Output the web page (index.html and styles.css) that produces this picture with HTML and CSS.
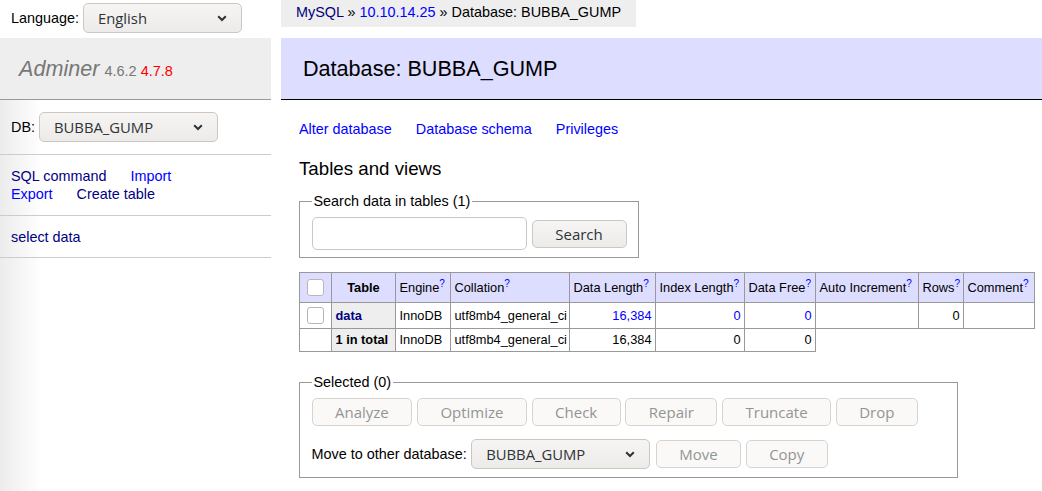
FILE: index.html
```html
<!DOCTYPE html>
<html lang="en">
<head>
<meta charset="utf-8">
<title>Database: BUBBA_GUMP - Adminer</title>
<link rel="stylesheet" href="styles.css">
</head>
<body>
<div class="page">
  <aside class="menu">
    <form class="lang">
      <label class="lbl">Language:</label>
      <div class="select sel-lang"><span>English</span><svg class="chev" width="10" height="7" viewBox="0 0 10 7"><path d="M1.2 1.2 L5 5 L8.8 1.2" fill="none" stroke="#2e3436" stroke-width="2"/></svg></div>
    </form>
    <h1><a class="h1" href="#">Adminer</a> <span class="version">4.6.2</span> <a class="version newver" href="#">4.7.8</a></h1>
    <div class="menu-body">
      <p class="dbs"><span>DB:</span><span class="select sel-db"><span>BUBBA_GUMP</span><svg class="chev" width="10" height="7" viewBox="0 0 10 7"><path d="M1.2 1.2 L5 5 L8.8 1.2" fill="none" stroke="#2e3436" stroke-width="2"/></svg></span></p>
      <p class="mlinks"><a class="v lk" href="#">SQL command</a> <a class="lk" href="#">Import</a><br><a class="lk" href="#">Export</a> <a class="v lk" href="#">Create table</a></p>
      <ul class="tables"><li><a class="v" href="#">select data</a></li></ul>
    </div>
  </aside>
  <main class="content">
    <div class="bc-wrap"><p class="breadcrumb"><a class="v" href="#">MySQL</a> » <a href="#">10.10.14.25</a> » Database: BUBBA_GUMP</p></div>
    <h2>Database: BUBBA_GUMP</h2>
    <div class="inner">
      <p class="links"><a class="lk" href="#">Alter database</a> <a class="lk" href="#">Database schema</a> <a class="lk" href="#">Privileges</a></p>
      <h3>Tables and views</h3>
      <fieldset class="search">
        <legend>Search data in tables (1)</legend>
        <div class="row">
          <input class="field" type="search">
          <button class="btn btn-search" type="button">Search</button>
        </div>
      </fieldset>
      <table class="grid">
        <colgroup>
          <col class="c-check"><col class="c-table"><col class="c-engine"><col class="c-coll"><col class="c-dlen">
          <col class="c-ilen"><col class="c-free"><col class="c-auto"><col class="c-rows"><col class="c-comm">
        </colgroup>
        <thead>
          <tr class="hrow">
            <td><input type="checkbox"></td>
            <th>Table</th>
            <td>Engine<sup><a href="#">?</a></sup></td>
            <td>Collation<sup><a href="#">?</a></sup></td>
            <td>Data Length<sup><a href="#">?</a></sup></td>
            <td>Index Length<sup><a href="#">?</a></sup></td>
            <td>Data Free<sup><a href="#">?</a></sup></td>
            <td>Auto Increment<sup><a href="#">?</a></sup></td>
            <td>Rows<sup><a href="#">?</a></sup></td>
            <td>Comment<sup><a href="#">?</a></sup></td>
          </tr>
        </thead>
        <tbody>
          <tr class="r1">
            <td><input type="checkbox"></td>
            <th><a class="v" href="#">data</a></th>
            <td>InnoDB</td>
            <td>utf8mb4_general_ci</td>
            <td class="number"><a href="#">16,384</a></td>
            <td class="number"><a href="#">0</a></td>
            <td class="number"><a href="#">0</a></td>
            <td class="number"></td>
            <td class="number">0</td>
            <td></td>
          </tr>
          <tr class="r2">
            <td></td>
            <th>1 in total</th>
            <td>InnoDB</td>
            <td>utf8mb4_general_ci</td>
            <td class="number">16,384</td>
            <td class="number">0</td>
            <td class="number">0</td>
          </tr>
        </tbody>
      </table>
      <fieldset class="selected">
        <legend>Selected (0)</legend>
        <div class="row btnrow">
          <button class="btn" type="button" disabled>Analyze</button>
          <button class="btn" type="button" disabled>Optimize</button>
          <button class="btn" type="button" disabled>Check</button>
          <button class="btn" type="button" disabled>Repair</button>
          <button class="btn" type="button" disabled>Truncate</button>
          <button class="btn" type="button" disabled>Drop</button>
        </div>
        <div class="row moverow">
          <span>Move to other database:</span>
          <span class="select sel-move"><span>BUBBA_GUMP</span><svg class="chev" width="10" height="7" viewBox="0 0 10 7"><path d="M1.2 1.2 L5 5 L8.8 1.2" fill="none" stroke="#2e3436" stroke-width="2"/></svg></span>
          <button class="btn" type="button" disabled>Move</button>
          <button class="btn" type="button" disabled>Copy</button>
        </div>
      </fieldset>
    </div>
  </main>
</div>
</body>
</html>
```
FILE: styles.css
```css
* { box-sizing: border-box; }
html, body { margin: 0; }
body {
  font: 14.4px/1.25 "Liberation Sans", Arial, sans-serif;
  color: #000;
  background: #fff;
}
a { color: #00f; text-decoration: none; }
a.v { color: #000080; }
.lk { margin-right: 20px; }

.page { display: flex; min-height: 100vh; }

/* sidebar */
.menu { width: 271px; flex: none; display: flex; flex-direction: column; }
.lang {
  height: 38px; margin: 0;
  display: flex; align-items: center; gap: 4px;
  padding: 0 0 2px 11px;
}
.select {
  height: 30px;
  display: flex; align-items: center; justify-content: space-between;
  padding: 0 14px;
  border: 1px solid #cdc7c2; border-radius: 5px;
  background: linear-gradient(#f6f5f4, #edebe9);
  font: 14.8px "Open Sans", "DejaVu Sans", sans-serif;
  color: #2e3436;
}
.sel-lang { width: 159px; }
.sel-db { width: 179px; }
.sel-move { width: 179px; }
.chev { flex: none; }

h1 {
  margin: 0;
  height: 62px;
  padding: 0 19px;
  display: flex; align-items: baseline; gap: 5px;
  padding-top: 17px;
  font-size: 21.6px; line-height: 27px; font-weight: normal;
  background: #eee; color: #777;
  border-bottom: 1px solid #999;
}
.h1 { color: #777; font-style: italic; }
.version { color: #777; font-size: 14.5px; line-height: 1; }
.newver { color: red; margin-left: -1px; }

.menu-body { flex: 1; background: linear-gradient(to right, #ececec 0, #fff 42px); }
.dbs {
  margin: 0; padding: 12px 11px;
  display: flex; align-items: center; gap: 4px;
  border-bottom: 1px solid #ccc;
}
.mlinks {
  margin: 0; padding: 12px 11px;
  line-height: 18px;
  border-bottom: 1px solid #ccc;
}
.tables {
  list-style: none; margin: 0;
  padding: 12px 11px 11px;
  line-height: 18px;
  border-bottom: 1px solid #ccc;
}

/* content */
.content { flex: 1; margin-left: 10px; }
.bc-wrap { height: 38px; }
.breadcrumb {
  display: inline-block; margin: 0;
  height: 27px; line-height: 25px;
  padding: 0 15px;
  background: #eee;
  white-space: nowrap;
}
h2 {
  margin: 0 0 20px;
  padding: 17px 22px;
  font-size: 21.6px; line-height: 27px; font-weight: normal;
  background: #ddf; color: #000;
  border-bottom: 1px solid #000;
}
.inner { padding: 0 0 20px 18px; }
.links { margin: 0; line-height: 18px; }
h3 {
  margin: 19px 0 0;
  font-size: 18.72px; line-height: 23px; font-weight: normal;
}

fieldset {
  margin: 12px 0 0;
  padding: 0 11.5px 7px;
  border: 1px solid #999;
  min-width: 0;
}
legend { padding: 0 2px; line-height: 18px; }
.row { display: flex; align-items: center; }
.search { width: 340px; padding-top: 7px; }
.search .row { gap: 5px; }
.field {
  width: 215px; height: 33px;
  border: 1px solid #cdc7c2; border-radius: 5px;
  background: #fff;
}
.btn {
  height: 28px;
  padding: 0 22.5px;
  border: 1px solid #cdc7c2; border-radius: 5px;
  background: linear-gradient(#f6f5f4, #edebe9);
  font: 15px "Open Sans", "DejaVu Sans", sans-serif;
  color: #2e3436;
}
.btn-search { width: 95px; padding: 0; }
.btn:disabled {
  background: #faf9f8;
  border-color: #d8d3cf;
  color: #929595;
}

/* table */
.grid {
  margin: 14px 0 0;
  border-collapse: collapse;
  table-layout: fixed;
  width: 735px;
  font-size: 12.8px; line-height: 16px;
}
.c-check { width: 32px; }
.c-table { width: 64px; }
.c-engine { width: 55px; }
.c-coll { width: 119px; }
.c-dlen { width: 86px; }
.c-ilen { width: 89px; }
.c-free { width: 71px; }
.c-auto { width: 103px; }
.c-rows { width: 45px; }
.c-comm { width: 71px; }
.grid td, .grid th {
  border: 1px solid #999;
  padding: 2px 3.5px;
  white-space: nowrap;
  overflow: hidden;
}
.grid th { background: #eee; text-align: left; }
.grid thead td, .grid thead th { background: #ddf; }
.grid thead th { text-align: center; }
.grid sup { line-height: 0; font-size: 10px; }
.hrow { height: 30px; }
.r1 { height: 26px; }
.r2 { height: 23px; }
.number { text-align: right; }
input[type=checkbox] {
  appearance: none;
  width: 17px; height: 17px;
  margin: 0 3px; display: block;
  border: 1px solid #bdb6b0; border-radius: 3px;
  background: #fff;
}

.selected { width: 659px; margin-top: 21px; padding-top: 7px; padding-bottom: 8px; }
.btnrow { gap: 4.6px; }
.moverow { margin-top: 13px; gap: 4.5px; }
.moverow .sel-move { margin-right: 1px; }
```
